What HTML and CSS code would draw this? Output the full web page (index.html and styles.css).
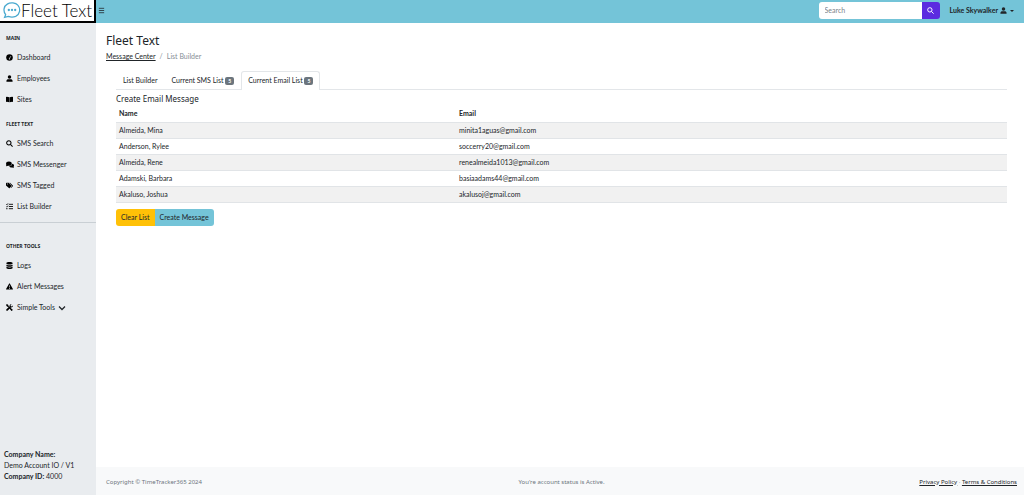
FILE: index.html
```html
<!DOCTYPE html>
<html lang="en">
<head>
<meta charset="utf-8">
<title>Fleet Text</title>
<link rel="stylesheet" href="styles.css">
</head>
<body>
<aside class="sidebar">
  <a class="logo" href="#">
    <svg class="logo-mark" viewBox="0 0 34 32" fill="none" stroke="#4aa9cf" stroke-width="2.400"><path d="M5 24C0 17 1 8 8 4c6-4 16-3 20 2 6 7 4 17-4 21-5 2-9 2-14 0l-7 2z"/><g fill="#4aa9cf" stroke="none"><circle cx="11" cy="15" r="2.2"/><circle cx="17" cy="15" r="2.2"/><circle cx="23" cy="15" r="2.2"/></g></svg>
    <span>Fleet Text</span>
  </a>
  <nav class="menu">
    <h2 class="menu-title">MAIN</h2>
    <a class="menu-link" href="#"><svg class="icon" viewBox="0 0 16 16"><circle cx="8" cy="8" r="7.5"/><path d="M8 10l3-5" stroke="#e9ecef" stroke-width="1.5"/><circle cx="8" cy="11" r="1.500" fill="#e9ecef"/></svg>Dashboard</a>
    <a class="menu-link" href="#"><svg class="icon" viewBox="0 0 16 16"><circle cx="8" cy="4.5" r="4"/><path d="M1 15.500v-2C1 11 3 9.500 5 9.500h6c2 0 4 1.500 4 4v2z"/></svg>Employees</a>
    <a class="menu-link" href="#"><svg class="icon" viewBox="0 0 16 16"><path d="M0 2q4-.5 7.600 1v11.500q-3.600-1.500-7.600-1zM16 2q-4-.5-7.600 1v11.500q3.600-1.500 7.600-1z"/></svg>Sites</a>
    <h2 class="menu-title">FLEET TEXT</h2>
    <a class="menu-link" href="#"><svg class="icon" viewBox="0 0 16 16"><g fill="none" stroke="currentColor" stroke-width="2.400"><circle cx="6.500" cy="6.500" r="5"/><path d="M10.200 10.200l4.800 4.800"/></g></svg>SMS Search</a>
    <a class="menu-link" href="#"><svg class="icon icon-wide" viewBox="0 0 18 16"><ellipse cx="6.500" cy="6" rx="6.500" ry="5"/><path d="M1 8l-1 4 5-1z"/><path d="M14 6.500c5 1 5 5 3 7l1 2.500-4-1c-4 0-6-1-7-3 4 0 7-2 7-5.500z"/></svg>SMS Messenger</a>
    <a class="menu-link" href="#"><svg class="icon" viewBox="0 0 18 16"><path fill-rule="evenodd" d="M0 2.500Q0 1 1.500 1H7l7 7q1 1 0 2l-4.500 4.500q-1 1-2 0L0 8zM3.500 3a1.200 1.200 0 1 0 .1 0z"/><path d="M9 1h1.500l7 7q1 1 0 2L13 14.500l-1-1L15.500 9z"/></svg>SMS Tagged</a>
    <a class="menu-link" href="#"><svg class="icon" viewBox="0 0 16 16"><g fill="none" stroke="currentColor" stroke-width="2"><path d="M6.500 3H16M6.500 8H16M6.500 13H16M0 3l1.500 1.500L4.500 1M0 8l1.500 1.500L4.500 6"/></g><circle cx="2" cy="13" r="1.500"/></svg>List Builder</a>
    <hr class="menu-rule">
    <h2 class="menu-title">OTHER TOOLS</h2>
    <a class="menu-link" href="#"><svg class="icon" viewBox="0 0 16 16"><path d="M1 2.500C1-.5 15-.5 15 2.500V4C15 6.500 1 6.500 1 4zM1 6q7 3 14 0v3c0 2.500-14 2.500-14 0zM1 11q7 3 14 0v2.500c0 3-14 3-14 0z"/></svg>Logs</a>
    <a class="menu-link" href="#"><svg class="icon" viewBox="0 0 16 16"><path fill-rule="evenodd" d="M7 1.500q1-1.500 2 0l6.800 12q.5 1.500-1 1.500H1.200q-1.500 0-1-1.500zM7.100 5.500l.3 4.500h1.200l.3-4.500zM7 11.500v1.700h2v-1.700z"/></svg>Alert Messages</a>
    <a class="menu-link" href="#"><svg class="icon" viewBox="0 0 16 16"><path d="M0 2l2-2 3.500 2.500v2l9.500 8q1 1-.5 2.500t-2.500.5L4.500 6h-2z"/><path d="M15.500 3.500l-2.500 2-2-.5-.5-2L13 .5C10 0 7.500 2 8.500 5L1 12q-1 1.500 0 3t3 0L11 8c3 .5 5.500-1.500 4.500-4.500z"/></svg>Simple Tools<svg class="chevron" viewBox="0 0 16 16" fill="none" stroke="currentColor" stroke-width="2.500"><path d="M2 5l6 6 6-6"/></svg></a>
  </nav>
  <div class="company">
    <b>Company Name:</b><br>Demo Account IO / V1<br><b>Company ID:</b> 4000
  </div>
</aside>
<div class="page">
  <header class="topbar">
    <button class="toggle" type="button" aria-label="Toggle menu"><svg class="bars" viewBox="0 0 16 16" stroke="currentColor" stroke-width="1.800"><path d="M2 3h12M2 8h12M2 13h12"/></svg></button>
    <form class="search">
      <input class="search-box" type="text" placeholder="Search" aria-label="Search">
      <button class="search-button" type="button" aria-label="Submit search"><svg class="icon" viewBox="0 0 16 16" fill="none" stroke="currentColor" stroke-width="2.200"><circle cx="6.500" cy="6.500" r="5"/><path d="M10.200 10.200l5 5"/></svg></button>
    </form>
    <button class="user" type="button">Luke Skywalker <svg class="icon" viewBox="0 0 16 16"><circle cx="8" cy="4.500" r="4"/><path d="M1 15.500v-2C1 11 3 9.500 5 9.500h6c2 0 4 1.500 4 4v2z"/></svg><span class="caret"></span></button>
  </header>
  <main class="content">
    <h1 class="title">Fleet Text</h1>
    <nav class="crumbs" aria-label="Breadcrumb"><a href="#">Message Center</a><span>/</span><span>List Builder</span></nav>
    <section class="panel">
      <div class="tabs" role="tablist">
        <button class="tab" type="button" role="tab">List Builder</button>
        <button class="tab" type="button" role="tab">Current SMS List <span class="badge">5</span></button>
        <button class="tab active" type="button" role="tab" aria-selected="true">Current Email List <span class="badge">5</span></button>
      </div>
      <h2 class="subtitle">Create Email Message</h2>
      <table class="list">
        <thead><tr><th>Name</th><th>Email</th></tr></thead>
        <tbody>
          <tr><td>Almeida, Mina</td><td>minita1aguas@gmail.com</td></tr>
          <tr><td>Anderson, Rylee</td><td>soccerry20@gmail.com</td></tr>
          <tr><td>Almeida, Rene</td><td>renealmeida1013@gmail.com</td></tr>
          <tr><td>Adamski, Barbara</td><td>basiaadams44@gmail.com</td></tr>
          <tr><td>Akaluso, Joshua</td><td>akalusoj@gmail.com</td></tr>
        </tbody>
      </table>
      <div class="actions"><button class="action clear" type="button">Clear List</button><button class="action create" type="button">Create Message</button></div>
    </section>
  </main>
  <footer class="footer">
    <span>Copyright © TimeTracker365 2024</span>
    <span>You're account status is Active.</span>
    <span class="legal"><a href="#">Privacy Policy</a> · <a href="#">Terms &amp; Conditions</a></span>
  </footer>
</div>
</body>
</html>
```
FILE: styles.css
```css
* { box-sizing: border-box; }
body {
  margin: 0;
  min-height: 100vh;
  display: flex;
  font: 7px/11px Lato, "Noto Sans", sans-serif;
  color: #212529;
  background: #fff;
}
h1, h2 { margin: 0; font-weight: 400; }
button, input { font: inherit; color: inherit; margin: 0; padding: 0; border: 0; background: none; }
a { color: inherit; }
.icon { width: 7px; height: 7px; flex: none; fill: currentColor; }

.sidebar { width: 96px; flex: none; display: flex; flex-direction: column; background: #e9ecef; }
.logo {
  display: flex;
  align-items: center;
  height: 23px;
  padding-left: 3px;
  border: solid #000;
  border-width: 0 2px 2px 0;
  background: #fff;
  font: 300 17px/20px Lato, sans-serif;
  color: #000;
  text-decoration: none;
  white-space: nowrap;
}
.logo-mark { width: 18px; height: 17px; flex: none; }
.menu { padding-top: 1px; }
.menu-title { margin-top: 6px; padding-left: 6px; font: 700 5px/17px "Noto Sans", sans-serif; }
.menu-link { display: flex; align-items: center; gap: 4px; height: 21px; padding-left: 6px; text-decoration: none; white-space: nowrap; }
.menu-link .icon { color: #000; }
.icon-wide { width: 8px; margin-right: -1px; }
.chevron { width: 8px; height: 8px; margin-left: -1px; }
.menu-rule { margin: 5px 0 15px; border: 0; border-top: 1px solid #c9cfd4; }
.company { margin-top: auto; padding: 0 4px 13px; }

.page { flex: 1; min-width: 0; display: flex; flex-direction: column; }
.topbar { display: flex; align-items: center; height: 23px; padding: 0 10px 2px 2px; background: #74c4d8; }
.toggle { display: flex; }
.bars { width: 7px; height: 7px; }
.search { display: flex; height: 17px; margin-left: auto; }
.search-box { width: 103px; padding: 0 6px; border-radius: 3px 0 0 3px; background: #fff; }
.search-box::placeholder { color: #7b838a; opacity: 1; }
.search-button { display: flex; align-items: center; justify-content: center; width: 18px; border-radius: 0 3px 3px 0; background: #5c2be0; color: #fff; }
.search-button .icon { fill: none; }
.user { display: flex; align-items: center; gap: 2px; margin-left: 10px; font-weight: 700; }
.caret { margin-left: 1px; border: 2px solid transparent; border-top-color: currentColor; border-bottom: 0; }

.content { flex: 1; padding: 9px 10px; }
.title { font: 12px/17px "Noto Sans", sans-serif; }
.crumbs { display: flex; gap: 4px; margin-top: 2px; color: #868e96; }
.crumbs a { color: #212529; }
.panel { padding: 9px 7px 0 10px; }
.tabs { display: flex; align-items: flex-start; border-bottom: 1px solid #e3e6e9; }
.tab { height: 18px; padding: 0 6px; border: 1px solid transparent; border-bottom: 0; white-space: nowrap; }
.active { margin-bottom: -1px; padding-bottom: 1px; border-color: #e3e6e9; border-radius: 3px 3px 0 0; background: #fff; height: 19px; }
.badge { display: inline-block; padding: 0 3px; border-radius: 2px; background: #6c757d; color: #fff; font-size: 5px; line-height: 8px; font-weight: 700; }
.subtitle { font: 8px/12px "Noto Sans", sans-serif; margin: 3px 0 1px; }
.list { width: 100%; table-layout: fixed; border-collapse: collapse; }
.list th, .list td { height: 16px; padding: 0 3px; text-align: left; border-bottom: 1px solid #e1e4e7; }
.list th:first-child { width: 340px; }
.list tbody tr:nth-child(odd) { background: #f1f1f1; }
.actions { display: flex; margin-top: 6px; }
.action { height: 17px; padding: 0 5px; }
.clear { border-radius: 3px 0 0 3px; background: #ffc107; }
.create { border-radius: 0 3px 3px 0; background: #74c4d8; }
.footer { display: grid; grid-template-columns: 1fr auto 1fr; align-items: center; height: 28px; padding: 2px 7px 0 10px; background: #f8f9fa; color: #6c757d; font-family: "Noto Sans", sans-serif; font-size: 6px; }
.legal { text-align: right; }
.legal a { color: #212529; }
```
